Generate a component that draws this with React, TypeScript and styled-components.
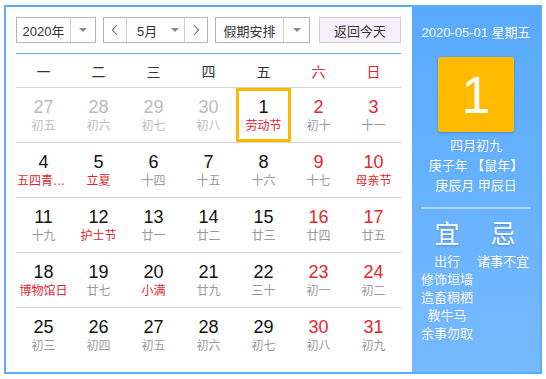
import styled, { createGlobalStyle } from "styled-components";

const GlobalStyle = createGlobalStyle`
  body {
    margin: 0;
    font-family: "Liberation Sans", "Noto Sans CJK SC", sans-serif;
    background: #fff;
  }
`;

type Day = {
  num: number;
  lunar: string;
  other?: boolean;
  weekend?: boolean;
  holiday?: boolean;
  selected?: boolean;
};

const weeks: Day[][] = [
  [
    { num: 27, lunar: "初五", other: true },
    { num: 28, lunar: "初六", other: true },
    { num: 29, lunar: "初七", other: true },
    { num: 30, lunar: "初八", other: true },
    { num: 1, lunar: "劳动节", holiday: true, selected: true },
    { num: 2, lunar: "初十", weekend: true },
    { num: 3, lunar: "十一", weekend: true },
  ],
  [
    { num: 4, lunar: "五四青年节", holiday: true },
    { num: 5, lunar: "立夏", holiday: true },
    { num: 6, lunar: "十四" },
    { num: 7, lunar: "十五" },
    { num: 8, lunar: "十六" },
    { num: 9, lunar: "十七", weekend: true },
    { num: 10, lunar: "母亲节", weekend: true, holiday: true },
  ],
  [
    { num: 11, lunar: "十九" },
    { num: 12, lunar: "护士节", holiday: true },
    { num: 13, lunar: "廿一" },
    { num: 14, lunar: "廿二" },
    { num: 15, lunar: "廿三" },
    { num: 16, lunar: "廿四", weekend: true },
    { num: 17, lunar: "廿五", weekend: true },
  ],
  [
    { num: 18, lunar: "博物馆日", holiday: true },
    { num: 19, lunar: "廿七" },
    { num: 20, lunar: "小满", holiday: true },
    { num: 21, lunar: "廿九" },
    { num: 22, lunar: "三十" },
    { num: 23, lunar: "初一", weekend: true },
    { num: 24, lunar: "初二", weekend: true },
  ],
  [
    { num: 25, lunar: "初三" },
    { num: 26, lunar: "初四" },
    { num: 27, lunar: "初五" },
    { num: 28, lunar: "初六" },
    { num: 29, lunar: "初七" },
    { num: 30, lunar: "初八", weekend: true },
    { num: 31, lunar: "初九", weekend: true },
  ],
];

const weekNames = ["一", "二", "三", "四", "五", "六", "日"];

const Frame = styled.div`
  margin: 5px 0 0 4px;
  width: 538px;
  height: 369px;
  box-sizing: border-box;
  border: 2px solid #5aacfd;
  display: flex;
`;

const Main = styled.div`
  width: 406px;
  box-sizing: border-box;
  padding: 10px 11px 0 10px;
`;

const Toolbar = styled.div`
  display: flex;
  height: 26px;
  font-size: 13px;
  color: #333;
`;

const Select = styled.div<{ $w: number; $ml?: number }>`
  width: ${(p) => p.$w}px;
  margin-left: ${(p) => p.$ml ?? 0}px;
  box-sizing: border-box;
  border: 1px solid #b4b4b4;
  display: flex;
  align-items: stretch;
  background: #fff;
`;

const SelectLabel = styled.div`
  flex: 1;
  display: flex;
  align-items: center;
  justify-content: center;
`;

const ArrowBox = styled.div<{ $w: number }>`
  width: ${(p) => p.$w}px;
  border-left: 1px solid #cfcfcf;
  display: flex;
  align-items: center;
  justify-content: center;
`;

const Caret = styled.span`
  width: 0;
  height: 0;
  border-left: 4px solid transparent;
  border-right: 4px solid transparent;
  border-top: 4px solid #888;
`;

const NavBtn = styled.div<{ $left?: boolean }>`
  width: 22px;
  display: flex;
  align-items: center;
  justify-content: center;
  border-left: ${(p) => (p.$left ? "none" : "1px solid #cfcfcf")};
  border-right: ${(p) => (p.$left ? "1px solid #cfcfcf" : "none")};
`;

const MonthLabel = styled.div`
  flex: 1;
  display: flex;
  align-items: center;
  padding-left: 10px;
  gap: 14px;
`;

const TodayBtn = styled.div`
  width: 82px;
  margin-left: 9px;
  box-sizing: border-box;
  border: 1px solid #d0d0d0;
  background: #f7f0fc;
  display: flex;
  align-items: center;
  justify-content: center;
`;

const BlueLine = styled.div`
  margin-top: 10px;
  height: 1px;
  background: #5aacfd;
`;

const WeekHead = styled.div`
  display: grid;
  grid-template-columns: repeat(7, 1fr);
  height: 33px;
  border-bottom: 1px solid #d4d4d4;
`;

const WeekName = styled.div<{ $red?: boolean }>`
  display: flex;
  align-items: center;
  justify-content: center;
  font-size: 14px;
  color: ${(p) => (p.$red ? "#e8262d" : "#333")};
`;

const Row = styled.div<{ $last?: boolean }>`
  display: grid;
  grid-template-columns: repeat(7, 1fr);
  height: 54px;
  border-bottom: ${(p) => (p.$last ? "none" : "1px solid #d4d4d4")};
`;

const Cell = styled.div<{ $selected?: boolean }>`
  display: flex;
  flex-direction: column;
  align-items: center;
  padding-top: 8px;
  box-sizing: border-box;
  box-shadow: ${(p) => (p.$selected ? "inset 0 0 0 3px #ffb900" : "none")};
`;

const Num = styled.div<{ $color: string }>`
  font-size: 18px;
  line-height: 22px;
  color: ${(p) => p.$color};
`;

const Lunar = styled.div<{ $color: string }>`
  font-size: 12px;
  line-height: 16px;
  color: ${(p) => p.$color};
  max-width: 53px;
  white-space: nowrap;
  overflow: hidden;
  text-overflow: ellipsis;
`;

const Side = styled.div`
  flex: 1;
  background: linear-gradient(#58aafd, #76bafe);
  color: #fff;
  display: flex;
  flex-direction: column;
  align-items: center;
  text-shadow: 0 0 1px rgba(40, 80, 160, 0.25);
`;

const DateLine = styled.div`
  font-size: 13px;
  line-height: 18px;
  margin-top: 17px;
`;

const BigDay = styled.div`
  margin-top: 15px;
  width: 76px;
  height: 75px;
  border-radius: 3px;
  background: #ffbb00;
  box-shadow: 0 1px 3px rgba(30, 60, 120, 0.35);
  display: flex;
  align-items: center;
  justify-content: center;
  font-size: 52px;
  text-shadow: none;
`;

const LunarInfo = styled.div`
  margin-top: 4px;
  font-size: 13px;
  line-height: 20px;
  text-align: center;
`;

const Divider = styled.div`
  margin-top: 11px;
  width: 110px;
  height: 2px;
  background: rgba(255, 255, 255, 0.45);
`;

const Advice = styled.div`
  display: flex;
  gap: 4px;
  margin-top: 10px;
  padding-right: 2px;
`;

const AdviceCol = styled.div`
  width: 52px;
  display: flex;
  flex-direction: column;
  align-items: center;
  font-size: 13px;
  line-height: 18px;
  white-space: nowrap;
`;

const AdviceHead = styled.div`
  font-size: 25px;
  line-height: 30px;
  margin-bottom: 4px;
  text-shadow: 0 1px 2px rgba(30, 60, 120, 0.35);
`;

function Chevron({ dir }: { dir: "l" | "r" }) {
  return (
    <svg width="8" height="12" viewBox="0 0 8 12">
      <polyline
        points={dir === "l" ? "6,1 1.5,6 6,11" : "2,1 6.5,6 2,11"}
        fill="none"
        stroke="#666"
        strokeWidth="1.1"
      />
    </svg>
  );
}

function numColor(d: Day) {
  if (d.other) return "#bbb";
  if (d.weekend) return "#e8262d";
  return "#111";
}

function lunarColor(d: Day) {
  if (d.other) return "#bbb";
  if (d.holiday) return "#e0262d";
  return "#999";
}

export default function App() {
  return (
    <>
      <GlobalStyle />
      <Frame>
        <Main>
          <Toolbar>
            <Select $w={80}>
              <SelectLabel>2020年</SelectLabel>
              <ArrowBox $w={24}>
                <Caret />
              </ArrowBox>
            </Select>
            <Select $w={105} $ml={7}>
              <NavBtn $left>
                <Chevron dir="l" />
              </NavBtn>
              <MonthLabel>
                5月
                <Caret />
              </MonthLabel>
              <NavBtn>
                <Chevron dir="r" />
              </NavBtn>
            </Select>
            <Select $w={95} $ml={7}>
              <SelectLabel>假期安排</SelectLabel>
              <ArrowBox $w={25}>
                <Caret />
              </ArrowBox>
            </Select>
            <TodayBtn>返回今天</TodayBtn>
          </Toolbar>
          <BlueLine />
          <WeekHead>
            {weekNames.map((w, i) => (
              <WeekName key={w} $red={i > 4}>
                {w}
              </WeekName>
            ))}
          </WeekHead>
          {weeks.map((week, wi) => (
            <Row key={wi} $last={wi === weeks.length - 1}>
              {week.map((d, di) => (
                <Cell key={di} $selected={d.selected}>
                  <Num $color={numColor(d)}>{d.num}</Num>
                  <Lunar $color={lunarColor(d)}>{d.lunar}</Lunar>
                </Cell>
              ))}
            </Row>
          ))}
        </Main>
        <Side>
          <DateLine>2020-05-01 星期五</DateLine>
          <BigDay>1</BigDay>
          <LunarInfo>
            四月初九
            <br />
            庚子年 【鼠年】
            <br />
            庚辰月 甲辰日
          </LunarInfo>
          <Divider />
          <Advice>
            <AdviceCol>
              <AdviceHead>宜</AdviceHead>
              <span>出行</span>
              <span>修饰垣墙</span>
              <span>造畜稠栖</span>
              <span>教牛马</span>
              <span>余事勿取</span>
            </AdviceCol>
            <AdviceCol>
              <AdviceHead>忌</AdviceHead>
              <span>诸事不宜</span>
            </AdviceCol>
          </Advice>
        </Side>
      </Frame>
    </>
  );
}
